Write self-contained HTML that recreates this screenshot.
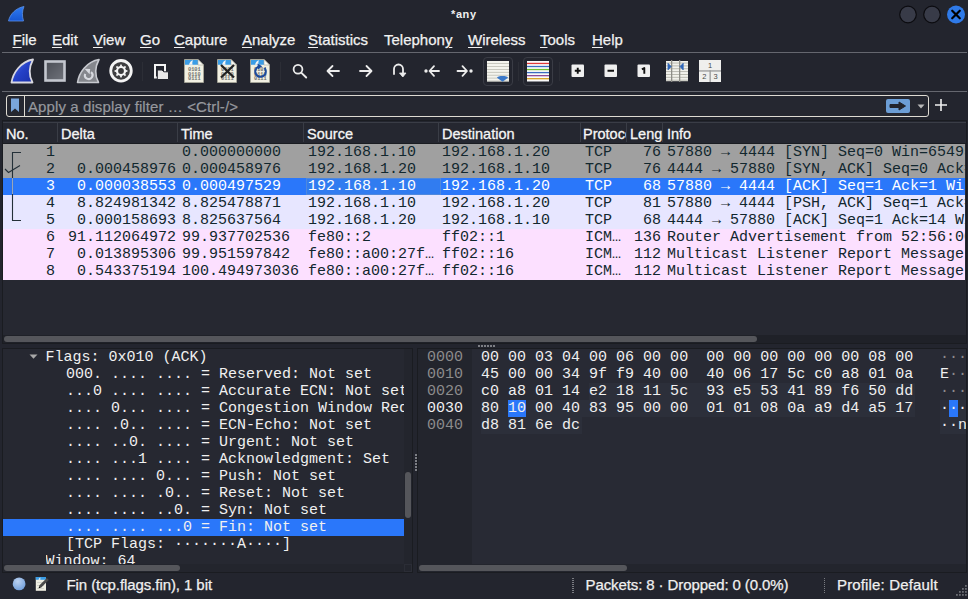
<!DOCTYPE html>
<html><head><meta charset="utf-8">
<style>
*{box-sizing:border-box}
html,body{margin:0;padding:0}
body{width:968px;height:599px;overflow:hidden;position:relative;background:#23252e;font-family:"Liberation Sans",sans-serif;color:#eeeeee}
.a{position:absolute;white-space:pre}
.menu{top:30px;font-size:15px;color:#f2f2f2;line-height:20px;-webkit-text-stroke:0.25px #f2f2f2}
.menu u{text-decoration:underline;text-decoration-thickness:1px;text-underline-offset:1.5px}
.ui{-webkit-text-stroke:0.25px currentColor}
.hl{background:#65676f;height:1px}
.hdr{position:absolute;top:122px;left:3px;width:963px;height:22px;background:#252730;border-top:1px solid #3a3d46;border-bottom:1px solid #1a1c21}
.hc{position:absolute;top:126px;font-size:14.5px;color:#f5f5f5;line-height:16px;-webkit-text-stroke:0.3px #f5f5f5}
.vd{position:absolute;top:123px;width:1px;height:19px;background:#3a3d46}
.mono{font-family:"Liberation Mono",monospace;font-size:15px}
.row{position:absolute;left:3px;width:962px;height:17px;color:#12272e}
.row span{position:absolute;top:0;line-height:17px;white-space:pre}
</style></head><body>
<!-- title bar -->
<svg class="a" style="left:7px;top:5px" width="19" height="18" viewBox="0 0 19 18">
<defs><linearGradient id="tf" x1="0" y1="0" x2="0" y2="1"><stop offset="0" stop-color="#2f7cf2"/><stop offset="1" stop-color="#1656d2"/></linearGradient></defs>
<path d="M1.5,16 C3,9 9,3 17,1.5 C15,6 15,11 16.5,16 Z" fill="url(#tf)" stroke="#5a90e8" stroke-width="0.8"/>
</svg>
<div class="a" style="left:451px;top:8px;font-size:11px;font-weight:bold;color:#f0f0f0;line-height:13px;letter-spacing:0.6px">*any</div>
<svg class="a" style="left:898px;top:4.5px" width="70" height="20">
<circle cx="10" cy="9.5" r="8.3" fill="#383b48" stroke="#0c0c10" stroke-width="1.2"/>
<circle cx="34" cy="9.5" r="8.3" fill="#383b48" stroke="#0c0c10" stroke-width="1.2"/>
<circle cx="58" cy="9.5" r="9" fill="#2f7ae8"/>
<path d="M54.2,5.7 L61.8,13.3 M61.8,5.7 L54.2,13.3" stroke="#000" stroke-width="2.2" stroke-linecap="round"/>
</svg>
<!-- menu -->
<div class="a menu" style="left:12.5px"><u>F</u>ile</div>
<div class="a menu" style="left:52px"><u>E</u>dit</div>
<div class="a menu" style="left:93px"><u>V</u>iew</div>
<div class="a menu" style="left:140px"><u>G</u>o</div>
<div class="a menu" style="left:174px"><u>C</u>apture</div>
<div class="a menu" style="left:242px"><u>A</u>nalyze</div>
<div class="a menu" style="left:308px"><u>S</u>tatistics</div>
<div class="a menu" style="left:384px">Telephon<u>y</u></div>
<div class="a menu" style="left:468px"><u>W</u>ireless</div>
<div class="a menu" style="left:540px"><u>T</u>ools</div>
<div class="a menu" style="left:592px"><u>H</u>elp</div>
<div class="a hl" style="left:2px;top:52px;width:965px"></div>
<div class="a hl" style="left:2px;top:91px;width:965px"></div>
<svg class="a" style="left:9px;top:58px" width="26" height="28" viewBox="0 0 26 28"><defs><linearGradient id="bf" x1="0" y1="0" x2="1" y2="1"><stop offset="0" stop-color="#5a78e8"/><stop offset="0.5" stop-color="#2440c8"/><stop offset="1" stop-color="#1a30a8"/></linearGradient></defs>
<path d="M2.5,24.5 C4,14.5 12,3.5 24,1.5 C20,9 19.5,17 23.5,24.5 Z" fill="url(#bf)" stroke="#d8d8e0" stroke-width="1.8" stroke-linejoin="round"/></svg>
<svg class="a" style="left:43px;top:59px" width="24" height="24" viewBox="0 0 24 24"><defs><linearGradient id="st" x1="0" y1="0" x2="1" y2="1"><stop offset="0" stop-color="#4a4d55"/><stop offset="1" stop-color="#70737b"/></linearGradient></defs>
<rect x="2.5" y="2.5" width="19" height="19" fill="url(#st)" stroke="#c4c7cf" stroke-width="2.6"/></svg>
<svg class="a" style="left:75px;top:58px" width="26" height="28" viewBox="0 0 26 28"><path d="M2.5,24.5 C4,14.5 12,3.5 24,1.5 C20,9 19.5,17 23.5,24.5 Z" fill="#85878d" stroke="#c8cad0" stroke-width="1.6" stroke-linejoin="round"/>
<path d="M16,14.2 A3.8,3.8 0 1 1 10.2,15.8" fill="none" stroke="#d8dae0" stroke-width="2.1"/>
<path d="M9.5,10.8 L15.2,11 L14.6,16.2 Z" fill="#d8dae0"/></svg>
<svg class="a" style="left:108px;top:58px" width="26" height="26" viewBox="0 0 26 26"><circle cx="13" cy="12.8" r="10.3" fill="#3e3e40" stroke="#f4f4f4" stroke-width="2.8"/>
<g fill="#f4f4f4"><rect x="12.1" y="6.6" width="1.8" height="2.6" transform="rotate(0 13 13)"/><rect x="12.1" y="6.6" width="1.8" height="2.6" transform="rotate(45 13 13)"/><rect x="12.1" y="6.6" width="1.8" height="2.6" transform="rotate(90 13 13)"/><rect x="12.1" y="6.6" width="1.8" height="2.6" transform="rotate(135 13 13)"/><rect x="12.1" y="6.6" width="1.8" height="2.6" transform="rotate(180 13 13)"/><rect x="12.1" y="6.6" width="1.8" height="2.6" transform="rotate(225 13 13)"/><rect x="12.1" y="6.6" width="1.8" height="2.6" transform="rotate(270 13 13)"/><rect x="12.1" y="6.6" width="1.8" height="2.6" transform="rotate(315 13 13)"/><circle cx="13" cy="13" r="5.1"/></g><circle cx="13" cy="13" r="2.9" fill="#3a3a3c"/></svg>
<div class="a" style="left:142px;top:62px;width:1px;height:19px;background:#2c2e36"></div>
<svg class="a" style="left:152px;top:62px" width="18" height="19" viewBox="0 0 18 19"><rect x="3" y="3" width="10" height="12.5" fill="none" stroke="#f4f4f4" stroke-width="2"/>
<path d="M5.3,8 H10 L11.8,9.8 H16.5 V17.5 H5.3 Z" fill="#e8e8e8" stroke="#22242c" stroke-width="1"/></svg>
<svg class="a" style="left:183px;top:58px" width="22" height="26" viewBox="0 0 22 26"><path d="M1.5,1.5 H15 L20.5,7 V24.5 H1.5 Z" fill="#f1f0e2" stroke="#a9a99b" stroke-width="0.8"/>
<path d="M2,2 H15 L15.5,6.8 H2 Z" fill="#3b9de6"/>
<path d="M6,6.8 C6.5,4.5 8,2.8 10,2.3 C9.2,3.8 9.2,5.5 9.6,6.8 Z" fill="#f4f4f4"/>
<path d="M15,1.5 V7 H20.5 Z" fill="#fafaf4" stroke="#a9a99b" stroke-width="0.6"/>
<g font-family="Liberation Mono" font-size="5.3" fill="#707070" font-weight="bold"><text x="5" y="13">0101</text><text x="5" y="17.5">0110</text><text x="5" y="22">0111</text></g></svg>
<svg class="a" style="left:216px;top:58px" width="22" height="26" viewBox="0 0 22 26"><path d="M1.5,1.5 H15 L20.5,7 V24.5 H1.5 Z" fill="#f1f0e2" stroke="#a9a99b" stroke-width="0.8"/>
<path d="M2,2 H15 L15.5,6.8 H2 Z" fill="#3b9de6"/>
<path d="M6,6.8 C6.5,4.5 8,2.8 10,2.3 C9.2,3.8 9.2,5.5 9.6,6.8 Z" fill="#f4f4f4"/>
<path d="M15,1.5 V7 H20.5 Z" fill="#fafaf4" stroke="#a9a99b" stroke-width="0.6"/>
<g font-family="Liberation Mono" font-size="5.3" fill="#707070" font-weight="bold"><text x="5" y="13">0101</text><text x="5" y="17.5">0110</text><text x="5" y="22">0111</text></g><path d="M5,7 L18,19.5 M18,7 L5,19.5" stroke="#222" stroke-width="2.3"/></svg>
<svg class="a" style="left:249px;top:58px" width="22" height="26" viewBox="0 0 22 26"><path d="M1.5,1.5 H15 L20.5,7 V24.5 H1.5 Z" fill="#f1f0e2" stroke="#a9a99b" stroke-width="0.8"/>
<path d="M2,2 H15 L15.5,6.8 H2 Z" fill="#3b9de6"/>
<path d="M6,6.8 C6.5,4.5 8,2.8 10,2.3 C9.2,3.8 9.2,5.5 9.6,6.8 Z" fill="#f4f4f4"/>
<path d="M15,1.5 V7 H20.5 Z" fill="#fafaf4" stroke="#a9a99b" stroke-width="0.6"/>
<g font-family="Liberation Mono" font-size="5.3" fill="#707070" font-weight="bold"><text x="5" y="13">0101</text><text x="5" y="17.5">0110</text><text x="5" y="22">0111</text></g><path d="M15.5,10 A5.3,5.3 0 1 1 9.5,8.6" fill="none" stroke="#1c4a9c" stroke-width="2"/><path d="M8.5,5.5 L13.2,8.3 L9,11.5 Z" fill="#1c4a9c"/></svg>
<div class="a" style="left:280px;top:62px;width:1px;height:19px;background:#2c2e36"></div>
<svg class="a" style="left:290px;top:62px" width="20" height="18" viewBox="0 0 20 18"><circle cx="8" cy="7.3" r="4.4" fill="none" stroke="#ececec" stroke-width="1.8"/><path d="M11.2,10.6 L16.2,15.5" stroke="#ececec" stroke-width="1.9" stroke-linecap="round"/></svg>
<svg class="a" style="left:324px;top:62px" width="18" height="18" viewBox="0 0 18 18"><path d="M15,9 H4 M8.5,4 L3.5,9 L8.5,14" fill="none" stroke="#ececec" stroke-width="1.8" stroke-linecap="round" stroke-linejoin="round"/></svg>
<svg class="a" style="left:357px;top:62px" width="18" height="18" viewBox="0 0 18 18"><path d="M3,9 H14 M9.5,4 L14.5,9 L9.5,14" fill="none" stroke="#ececec" stroke-width="1.8" stroke-linecap="round" stroke-linejoin="round"/></svg>
<svg class="a" style="left:390px;top:62px" width="18" height="18" viewBox="0 0 18 18"><path d="M4,12 V7 A4.5,4.5 0 0 1 13,7 V12" fill="none" stroke="#ececec" stroke-width="1.8" stroke-linecap="round"/><path d="M9.5,11 H16 L12.8,15 Z" fill="#ececec" stroke="#ececec" stroke-width="0.8" stroke-linejoin="round"/></svg>
<svg class="a" style="left:422px;top:62px" width="20" height="18" viewBox="0 0 20 18"><circle cx="4" cy="9" r="1.7" fill="#ececec"/><path d="M17,9 H8 M12,4.2 L7.5,9 L12,13.8" fill="none" stroke="#ececec" stroke-width="1.8" stroke-linecap="round" stroke-linejoin="round"/></svg>
<svg class="a" style="left:455px;top:62px" width="20" height="18" viewBox="0 0 20 18"><circle cx="16" cy="9" r="1.7" fill="#ececec"/><path d="M2.5,9 H11.5 M7.5,4.2 L12,9 L7.5,13.8" fill="none" stroke="#ececec" stroke-width="1.8" stroke-linecap="round" stroke-linejoin="round"/></svg>
<div class="a" style="left:483px;top:57px;width:30px;height:29px;border:1px solid #3a3c45;border-radius:4px"></div>
<svg class="a" style="left:487px;top:61px" width="22" height="21" viewBox="0 0 22 21"><rect x="0" y="0" width="22" height="20.5" fill="#f4f4ee"/><rect x="0" y="2.2" width="22" height="0.8" fill="#bdbdb3"/><rect x="0" y="5.1" width="22" height="0.8" fill="#bdbdb3"/><rect x="0" y="8.0" width="22" height="0.8" fill="#bdbdb3"/><rect x="0" y="10.899999999999999" width="22" height="0.8" fill="#bdbdb3"/><rect x="0" y="13.8" width="22" height="0.8" fill="#bdbdb3"/><rect x="0" y="16.7" width="22" height="0.8" fill="#bdbdb3"/><rect x="0" y="19.599999999999998" width="22" height="0.8" fill="#bdbdb3"/><path d="M10,16.8 C10,14.3 21,14.3 21,16.8 L15.5,20.8 Z" fill="#3a78c8"/></svg>
<div class="a" style="left:518px;top:62px;width:1px;height:19px;background:#2c2e36"></div>
<div class="a" style="left:523px;top:57px;width:30px;height:29px;border:1px solid #3a3c45;border-radius:4px"></div>
<svg class="a" style="left:527px;top:61px" width="22" height="21" viewBox="0 0 22 21"><rect x="0" y="0" width="22" height="20.5" fill="#fafafa"/><rect x="0" y="1.8" width="22" height="1.3" fill="#e03a3a"/><rect x="0" y="4.85" width="22" height="1.3" fill="#3a6cc0"/><rect x="0" y="7.8999999999999995" width="22" height="1.3" fill="#70c030"/><rect x="0" y="10.95" width="22" height="1.3" fill="#3a6cc0"/><rect x="0" y="14.0" width="22" height="1.3" fill="#8a4a9a"/><rect x="0" y="17.05" width="22" height="1.3" fill="#d8a020"/></svg>
<div class="a" style="left:559px;top:62px;width:1px;height:19px;background:#2c2e36"></div>
<svg class="a" style="left:571.3px;top:64px" width="14" height="14" viewBox="0 0 14 14"><rect x="0.5" y="0.5" width="12.5" height="12.5" rx="1" fill="#efefef"/><path d="M6.75,3.8 V9.7 M3.8,6.75 H9.7" stroke="#111" stroke-width="1.9"/></svg>
<svg class="a" style="left:604.3px;top:64px" width="14" height="14" viewBox="0 0 14 14"><rect x="0.5" y="0.5" width="12.5" height="12.5" rx="1" fill="#efefef"/><path d="M3.5,6.75 H10" stroke="#111" stroke-width="2"/></svg>
<svg class="a" style="left:637.3px;top:64px" width="14" height="14" viewBox="0 0 14 14"><rect x="0.5" y="0.5" width="12.5" height="12.5" rx="1" fill="#efefef"/><path d="M4.9,5.4 L7.3,4 V9.8" fill="none" stroke="#111" stroke-width="1.9" stroke-linejoin="round"/></svg>
<svg class="a" style="left:665px;top:59px" width="24" height="24" viewBox="0 0 24 24"><rect x="1" y="2" width="22" height="20.2" fill="#f2f2ec"/><rect x="1" y="3.6" width="22" height="0.9" fill="#b4b4aa"/><rect x="1" y="6.45" width="22" height="0.9" fill="#b4b4aa"/><rect x="1" y="9.3" width="22" height="0.9" fill="#b4b4aa"/><rect x="1" y="12.15" width="22" height="0.9" fill="#b4b4aa"/><rect x="1" y="15.0" width="22" height="0.9" fill="#b4b4aa"/><rect x="1" y="17.85" width="22" height="0.9" fill="#b4b4aa"/><rect x="1" y="20.700000000000003" width="22" height="0.9" fill="#b4b4aa"/><rect x="6" y="1" width="1.3" height="22" fill="#8e8e88"/><rect x="14" y="1" width="1.3" height="22" fill="#8e8e88"/><path d="M3,4.3 L6.2,7.6 L3,10.9 Z" fill="#2f66b8" stroke="#2f66b8" stroke-width="0.8" stroke-linejoin="round"/><path d="M18.2,4.3 L15,7.6 L18.2,10.9 Z" fill="#2f66b8" stroke="#2f66b8" stroke-width="0.8" stroke-linejoin="round"/></svg>
<svg class="a" style="left:698px;top:59px" width="24" height="24" viewBox="0 0 24 24"><rect x="1" y="1" width="22" height="22" fill="#efefed"/><rect x="1" y="11.3" width="22" height="1.3" fill="#9a9a9a"/><rect x="11.5" y="11.3" width="1.3" height="11.7" fill="#9a9a9a"/><g font-family="Liberation Sans" font-size="7.5" fill="#4a4a4a"><text x="10" y="8.6">1</text><text x="4.3" y="20">2</text><text x="15.5" y="20">3</text></g></svg>
<!-- filter -->
<div class="a" style="left:6px;top:95px;width:923px;height:22px;border:1.3px solid #dedbd3;border-radius:3px;background:#252730"></div>
<div class="a" style="left:24px;top:96px;width:1px;height:20px;background:#dedbd3"></div>
<svg class="a" style="left:10px;top:98px" width="10" height="15"><path d="M1,0.5 H9 V14 L5,10.5 L1,14 Z" fill="#7aa6dc"/></svg>
<div class="a" style="left:28px;top:98px;font-size:15px;color:#96989e;line-height:18px;letter-spacing:0.1px;-webkit-text-stroke:0.2px #96989e">Apply a display filter … &lt;Ctrl-/&gt;</div>
<div class="a" style="left:886px;top:99px;width:24px;height:14px;background:#6c9ed6;border-radius:2px"></div>
<svg class="a" style="left:886px;top:99px" width="24" height="14"><path d="M4,5.5 H13 V3 L19.5,7 L13,11 V8.5 H4 Z" fill="#22242c" stroke="#22242c" stroke-width="1" stroke-linejoin="round"/></svg>
<svg class="a" style="left:917px;top:104px" width="8" height="5"><path d="M0.5,0.5 H7.5 L4,4.5 Z" fill="#b8b8b8"/></svg>
<svg class="a" style="left:934px;top:98px" width="14" height="14"><path d="M7,1 V13 M1,7 H13" stroke="#f0f0f0" stroke-width="1.6"/></svg>
<!-- packet list header -->
<div class="a" style="left:2px;top:120px;width:965px;height:224px;border:1px solid #1a1c21"></div>
<div class="a" style="left:3px;top:143px;width:963px;height:200px;background:#262831"></div>
<div class="hdr"></div>
<div class="vd" style="left:57px"></div>
<div class="vd" style="left:177px"></div>
<div class="vd" style="left:303px"></div>
<div class="vd" style="left:438px"></div>
<div class="vd" style="left:580px"></div>
<div class="vd" style="left:626px"></div>
<div class="vd" style="left:662px"></div>
<div class="hc" style="left:6px">No.</div>
<div class="hc" style="left:61px">Delta</div>
<div class="hc" style="left:181px">Time</div>
<div class="hc" style="left:307px">Source</div>
<div class="hc" style="left:442px">Destination</div>
<div class="hc" style="left:583px;width:43px;overflow:hidden">Protocol</div>
<div class="hc" style="left:630px;width:32px;overflow:hidden">Length</div>
<div class="hc" style="left:667px">Info</div>
<div class="row mono" style="top:144px;background:#a0a0a0;color:#12272e">
<span style="right:910.1px">1</span>
<span style="right:789px"></span>
<span style="left:179px">0.000000000</span>
<span style="left:305px">192.168.1.10</span>
<span style="left:439px">192.168.1.20</span>
<span style="left:582px">TCP</span>
<span style="right:304px">76</span>
<span style="left:664px;width:298px;overflow:hidden">57880 → 4444 [SYN] Seq=0 Win=65495 Len=0 MSS=65495</span>
</div>
<div class="row mono" style="top:161px;background:#a0a0a0;color:#12272e">
<span style="right:910.1px">2</span>
<span style="right:789px">0.000458976</span>
<span style="left:179px">0.000458976</span>
<span style="left:305px">192.168.1.20</span>
<span style="left:439px">192.168.1.10</span>
<span style="left:582px">TCP</span>
<span style="right:304px">76</span>
<span style="left:664px;width:298px;overflow:hidden">4444 → 57880 [SYN, ACK] Seq=0 Ack=1 Win=65483</span>
</div>
<div class="row mono" style="top:178px;background:#2a77fa;color:#ffffff">
<div style="position:absolute;left:303px;top:0;width:135px;height:17px;background:#317cf0;border:1px solid #4f88dc"></div>
<span style="right:910.1px">3</span>
<span style="right:789px">0.000038553</span>
<span style="left:179px">0.000497529</span>
<span style="left:305px">192.168.1.10</span>
<span style="left:439px">192.168.1.20</span>
<span style="left:582px">TCP</span>
<span style="right:304px">68</span>
<span style="left:664px;width:298px;overflow:hidden">57880 → 4444 [ACK] Seq=1 Ack=1 Win=65536 Len=0</span>
</div>
<div class="row mono" style="top:195px;background:#e7e6ff;color:#12272e">
<span style="right:910.1px">4</span>
<span style="right:789px">8.824981342</span>
<span style="left:179px">8.825478871</span>
<span style="left:305px">192.168.1.10</span>
<span style="left:439px">192.168.1.20</span>
<span style="left:582px">TCP</span>
<span style="right:304px">81</span>
<span style="left:664px;width:298px;overflow:hidden">57880 → 4444 [PSH, ACK] Seq=1 Ack=1 Win=65536</span>
</div>
<div class="row mono" style="top:212px;background:#e7e6ff;color:#12272e">
<span style="right:910.1px">5</span>
<span style="right:789px">0.000158693</span>
<span style="left:179px">8.825637564</span>
<span style="left:305px">192.168.1.20</span>
<span style="left:439px">192.168.1.10</span>
<span style="left:582px">TCP</span>
<span style="right:304px">68</span>
<span style="left:664px;width:298px;overflow:hidden">4444 → 57880 [ACK] Seq=1 Ack=14 Win=65536</span>
</div>
<div class="row mono" style="top:229px;background:#fce0ff;color:#12272e">
<span style="right:910.1px">6</span>
<span style="right:789px">91.112064972</span>
<span style="left:179px">99.937702536</span>
<span style="left:305px">fe80::2</span>
<span style="left:439px">ff02::1</span>
<span style="left:582px">ICM…</span>
<span style="right:304px">136</span>
<span style="left:664px;width:298px;overflow:hidden">Router Advertisement from 52:56:00:12:35:02</span>
</div>
<div class="row mono" style="top:246px;background:#fce0ff;color:#12272e">
<span style="right:910.1px">7</span>
<span style="right:789px">0.013895306</span>
<span style="left:179px">99.951597842</span>
<span style="left:305px">fe80::a00:27f…</span>
<span style="left:439px">ff02::16</span>
<span style="left:582px">ICM…</span>
<span style="right:304px">112</span>
<span style="left:664px;width:298px;overflow:hidden">Multicast Listener Report Message v2</span>
</div>
<div class="row mono" style="top:263px;background:#fce0ff;color:#12272e">
<span style="right:910.1px">8</span>
<span style="right:789px">0.543375194</span>
<span style="left:179px">100.494973036</span>
<span style="left:305px">fe80::a00:27f…</span>
<span style="left:439px">ff02::16</span>
<span style="left:582px">ICM…</span>
<span style="right:304px">112</span>
<span style="left:664px;width:298px;overflow:hidden">Multicast Listener Report Message v2</span>
</div>
<!-- related lines -->
<svg class="a" style="left:0;top:143px" width="30" height="85">
<path d="M21,9.5 H12.5 V77.5 H21" fill="none" stroke="#243038" stroke-width="1.1"/>
<path d="M12.5,35 V51" stroke="#9aa6b8" stroke-width="1.1"/>
<path d="M5,26 L8.5,29.5 L20,22.5" fill="none" stroke="#243038" stroke-width="1.1"/>
</svg>
<!-- packet list scrollbar -->
<div class="a" style="left:3px;top:335px;width:963px;height:8px;background:#1f2128"></div>
<div class="a" style="left:4px;top:336px;width:753px;height:6px;background:#55565b;border-radius:3px"></div>
<div class="a" style="left:2px;top:348px;width:411px;height:225px;border:1px solid #1a1c21;background:#22242c"></div>
<div class="a" style="left:3px;top:349px;width:409px;height:223px;background:#262831;overflow:hidden">
<div style="position:absolute;left:0;top:170px;width:401px;height:17px;background:#2a77fa"></div>
<div class="mono" style="position:absolute;left:42.5px;top:0px;line-height:17px;white-space:pre;color:#f0f0f0;width:359.0px;overflow:hidden">Flags: 0x010 (ACK)</div>
<div class="mono" style="position:absolute;left:63px;top:17px;line-height:17px;white-space:pre;color:#f0f0f0;width:338.5px;overflow:hidden">000. .... .... = Reserved: Not set</div>
<div class="mono" style="position:absolute;left:63px;top:34px;line-height:17px;white-space:pre;color:#f0f0f0;width:338.5px;overflow:hidden">...0 .... .... = Accurate ECN: Not set</div>
<div class="mono" style="position:absolute;left:63px;top:51px;line-height:17px;white-space:pre;color:#f0f0f0;width:338.5px;overflow:hidden">.... 0... .... = Congestion Window Reduced: Not set</div>
<div class="mono" style="position:absolute;left:63px;top:68px;line-height:17px;white-space:pre;color:#f0f0f0;width:338.5px;overflow:hidden">.... .0.. .... = ECN-Echo: Not set</div>
<div class="mono" style="position:absolute;left:63px;top:85px;line-height:17px;white-space:pre;color:#f0f0f0;width:338.5px;overflow:hidden">.... ..0. .... = Urgent: Not set</div>
<div class="mono" style="position:absolute;left:63px;top:102px;line-height:17px;white-space:pre;color:#f0f0f0;width:338.5px;overflow:hidden">.... ...1 .... = Acknowledgment: Set</div>
<div class="mono" style="position:absolute;left:63px;top:119px;line-height:17px;white-space:pre;color:#f0f0f0;width:338.5px;overflow:hidden">.... .... 0... = Push: Not set</div>
<div class="mono" style="position:absolute;left:63px;top:136px;line-height:17px;white-space:pre;color:#f0f0f0;width:338.5px;overflow:hidden">.... .... .0.. = Reset: Not set</div>
<div class="mono" style="position:absolute;left:63px;top:153px;line-height:17px;white-space:pre;color:#f0f0f0;width:338.5px;overflow:hidden">.... .... ..0. = Syn: Not set</div>
<div class="mono" style="position:absolute;left:63px;top:170px;line-height:17px;white-space:pre;color:#f0f0f0;width:338.5px;overflow:hidden">.... .... ...0 = Fin: Not set</div>
<div class="mono" style="position:absolute;left:63px;top:187px;line-height:17px;white-space:pre;color:#f0f0f0;width:338.5px;overflow:hidden">[TCP Flags: ·······A····]</div>
<div class="mono" style="position:absolute;left:42.5px;top:204px;line-height:17px;white-space:pre;color:#f0f0f0;width:359.0px;overflow:hidden">Window: 64</div>
<svg style="position:absolute;left:26px;top:5px" width="9" height="6"><path d="M0.5,0.5 H8.5 L4.5,4.8 Z" fill="#a8a8a8"/></svg>
<div style="position:absolute;left:401px;top:0;width:8px;height:215px;background:#23252d"></div>
<div style="position:absolute;left:402px;top:123px;width:6px;height:46px;background:#55565b;border-radius:3px"></div>
<div style="position:absolute;left:0;top:215px;width:401px;height:8px;background:#23252d"></div>
<div style="position:absolute;left:1px;top:216px;width:176px;height:6px;background:#55565b;border-radius:3px"></div>
<div style="position:absolute;left:401px;top:215px;width:8px;height:8px;background:#23252d;border:1px solid #2b2d36"></div>
</div>
<div class="a" style="left:417px;top:348px;width:550px;height:225px;border:1px solid #1a1c21"></div>
<div class="a" style="left:418px;top:349px;width:548px;height:223px;background:#282a34;overflow:hidden">
<div style="position:absolute;left:0;top:0;width:54px;height:215px;background:#23252d"></div>
<div style="position:absolute;left:170.60000000000002px;top:34px;width:326.0px;height:17px;background:#2c2f3a"></div>
<div style="position:absolute;left:62.60000000000002px;top:51px;width:434.0px;height:17px;background:#2c2f3a"></div>
<div style="position:absolute;left:62.60000000000002px;top:68px;width:101.0px;height:17px;background:#2c2f3a"></div>
<div style="position:absolute;left:521.5px;top:51px;width:40px;height:34px;background:#2c2f3a"></div>
<div style="position:absolute;left:90.10000000000002px;top:51px;width:18px;height:17px;background:#2a77fa"></div>
<div style="position:absolute;left:531.2px;top:51px;width:9px;height:17px;background:#2a77fa"></div>
<div class="mono" style="position:absolute;left:9px;top:0px;line-height:17px;color:#8c8c8c">0000</div>
<div class="mono" style="position:absolute;left:63.10000000000002px;top:0px;line-height:17px;color:#f0f0f0;white-space:pre">00 00 03 04 00 06 00 00  00 00 00 00 00 00 08 00</div>
<div class="mono" style="position:absolute;left:9px;top:17px;line-height:17px;color:#8c8c8c">0010</div>
<div class="mono" style="position:absolute;left:63.10000000000002px;top:17px;line-height:17px;color:#f0f0f0;white-space:pre">45 00 00 34 9f f9 40 00  40 06 17 5c c0 a8 01 0a</div>
<div class="mono" style="position:absolute;left:9px;top:34px;line-height:17px;color:#8c8c8c">0020</div>
<div class="mono" style="position:absolute;left:63.10000000000002px;top:34px;line-height:17px;color:#f0f0f0;white-space:pre">c0 a8 01 14 e2 18 11 5c  93 e5 53 41 89 f6 50 dd</div>
<div class="mono" style="position:absolute;left:9px;top:51px;line-height:17px;color:#f0f0f0">0030</div>
<div class="mono" style="position:absolute;left:63.10000000000002px;top:51px;line-height:17px;color:#f0f0f0;white-space:pre">80 10 00 40 83 95 00 00  01 01 08 0a a9 d4 a5 17</div>
<div class="mono" style="position:absolute;left:9px;top:68px;line-height:17px;color:#8c8c8c">0040</div>
<div class="mono" style="position:absolute;left:63.10000000000002px;top:68px;line-height:17px;color:#f0f0f0;white-space:pre">d8 81 6e dc</div>
<div class="mono" style="position:absolute;left:522px;top:0px;line-height:17px;white-space:pre"><span style="color:#8c8c8c">·</span><span style="color:#8c8c8c">·</span><span style="color:#8c8c8c">·</span></div>
<div class="mono" style="position:absolute;left:522px;top:17px;line-height:17px;white-space:pre"><span style="color:#f0f0f0">E</span><span style="color:#8c8c8c">·</span><span style="color:#8c8c8c">·</span></div>
<div class="mono" style="position:absolute;left:522px;top:34px;line-height:17px;white-space:pre"><span style="color:#8c8c8c">·</span><span style="color:#8c8c8c">·</span><span style="color:#8c8c8c">·</span></div>
<div class="mono" style="position:absolute;left:522px;top:51px;line-height:17px;white-space:pre"><span style="color:#f0f0f0">·</span><span style="color:#f0f0f0">·</span><span style="color:#f0f0f0">·</span></div>
<div class="mono" style="position:absolute;left:522px;top:68px;line-height:17px;white-space:pre"><span style="color:#f0f0f0">·</span><span style="color:#f0f0f0">·</span><span style="color:#f0f0f0">n</span></div>
<div style="position:absolute;left:0px;top:215px;width:548px;height:8px;background:#23252d"></div>
<div style="position:absolute;left:1px;top:216px;width:208px;height:6px;background:#55565b;border-radius:3px"></div>
</div>
<svg class="a" style="left:11px;top:576px" width="16" height="16"><defs><radialGradient id="sb" cx="0.4" cy="0.3" r="0.8"><stop offset="0" stop-color="#bcd2f0"/><stop offset="1" stop-color="#6a9ad8"/></radialGradient></defs><circle cx="8.1" cy="7.9" r="6.4" fill="url(#sb)"/></svg>
<svg class="a" style="left:35px;top:576px" width="16" height="16"><path d="M0.8,1 H11 V14.8 H0.8 Z" fill="#efeee2"/><path d="M0.8,1 H11 V3.8 H0.8 Z" fill="#3b9de6"/><path d="M3.5,3.8 C3.8,2.8 4.5,2 5.5,1.6 C5.2,2.4 5.2,3.2 5.4,3.8 Z" fill="#f4f4f4"/><g fill="#c8c8c0"><rect x="2" y="6" width="7" height="0.7"/><rect x="2" y="9" width="7" height="0.7"/><rect x="2" y="12" width="7" height="0.7"/></g><path d="M5,10.8 L12.8,3" stroke="#4a4a4a" stroke-width="2.8"/><path d="M3.6,12.3 L4.2,10 L5.9,11.7 Z" fill="#111"/></svg>
<div class="a" style="left:66.5px;top:576px;font-size:15px;line-height:18px;color:#f0f0f0;letter-spacing:-0.08px;-webkit-text-stroke:0.25px #f0f0f0">Fin (tcp.flags.fin), 1 bit</div>
<div class="a" style="left:572px;top:578px;width:1.5px;height:1px;background:#7a7c82"></div><div class="a" style="left:572px;top:580px;width:1.5px;height:1px;background:#7a7c82"></div><div class="a" style="left:572px;top:582px;width:1.5px;height:1px;background:#7a7c82"></div><div class="a" style="left:572px;top:584px;width:1.5px;height:1px;background:#7a7c82"></div><div class="a" style="left:572px;top:586px;width:1.5px;height:1px;background:#7a7c82"></div><div class="a" style="left:572px;top:588px;width:1.5px;height:1px;background:#7a7c82"></div><div class="a" style="left:572px;top:590px;width:1.5px;height:1px;background:#7a7c82"></div><div class="a" style="left:572px;top:592px;width:1.5px;height:1px;background:#7a7c82"></div>
<div class="a" style="left:585.5px;top:576px;font-size:15px;line-height:18px;color:#f0f0f0;letter-spacing:-0.1px;-webkit-text-stroke:0.25px #f0f0f0">Packets: 8 · Dropped: 0 (0.0%)</div>
<div class="a" style="left:823.5px;top:578px;width:1.5px;height:1px;background:#7a7c82"></div><div class="a" style="left:823.5px;top:580px;width:1.5px;height:1px;background:#7a7c82"></div><div class="a" style="left:823.5px;top:582px;width:1.5px;height:1px;background:#7a7c82"></div><div class="a" style="left:823.5px;top:584px;width:1.5px;height:1px;background:#7a7c82"></div><div class="a" style="left:823.5px;top:586px;width:1.5px;height:1px;background:#7a7c82"></div><div class="a" style="left:823.5px;top:588px;width:1.5px;height:1px;background:#7a7c82"></div><div class="a" style="left:823.5px;top:590px;width:1.5px;height:1px;background:#7a7c82"></div><div class="a" style="left:823.5px;top:592px;width:1.5px;height:1px;background:#7a7c82"></div>
<div class="a" style="left:837px;top:576px;font-size:15px;line-height:18px;color:#f0f0f0;letter-spacing:0.15px;-webkit-text-stroke:0.25px #f0f0f0">Profile: Default</div>
<svg class="a" style="left:952px;top:582px" width="16" height="14"><rect x="13" y="12" width="1.8" height="1.8" fill="#6a6c72"/><rect x="10" y="12" width="1.8" height="1.8" fill="#6a6c72"/><rect x="7" y="12" width="1.8" height="1.8" fill="#6a6c72"/><rect x="4" y="12" width="1.8" height="1.8" fill="#6a6c72"/><rect x="13" y="9" width="1.8" height="1.8" fill="#6a6c72"/><rect x="10" y="9" width="1.8" height="1.8" fill="#6a6c72"/><rect x="7" y="9" width="1.8" height="1.8" fill="#6a6c72"/><rect x="13" y="6" width="1.8" height="1.8" fill="#6a6c72"/><rect x="10" y="6" width="1.8" height="1.8" fill="#6a6c72"/><rect x="13" y="3" width="1.8" height="1.8" fill="#6a6c72"/></svg>
<div class="a" style="left:478px;top:345px;width:2px;height:2px;background:#7c7e84"></div><div class="a" style="left:481px;top:345px;width:2px;height:2px;background:#7c7e84"></div><div class="a" style="left:484px;top:345px;width:2px;height:2px;background:#7c7e84"></div><div class="a" style="left:487px;top:345px;width:2px;height:2px;background:#7c7e84"></div><div class="a" style="left:490px;top:345px;width:2px;height:2px;background:#7c7e84"></div><div class="a" style="left:493px;top:345px;width:2px;height:2px;background:#7c7e84"></div>
<div class="a" style="left:415px;top:454px;width:2px;height:2px;background:#7c7e84"></div><div class="a" style="left:415px;top:457px;width:2px;height:2px;background:#7c7e84"></div><div class="a" style="left:415px;top:460px;width:2px;height:2px;background:#7c7e84"></div><div class="a" style="left:415px;top:463px;width:2px;height:2px;background:#7c7e84"></div><div class="a" style="left:415px;top:466px;width:2px;height:2px;background:#7c7e84"></div><div class="a" style="left:415px;top:469px;width:2px;height:2px;background:#7c7e84"></div>
</body></html>
